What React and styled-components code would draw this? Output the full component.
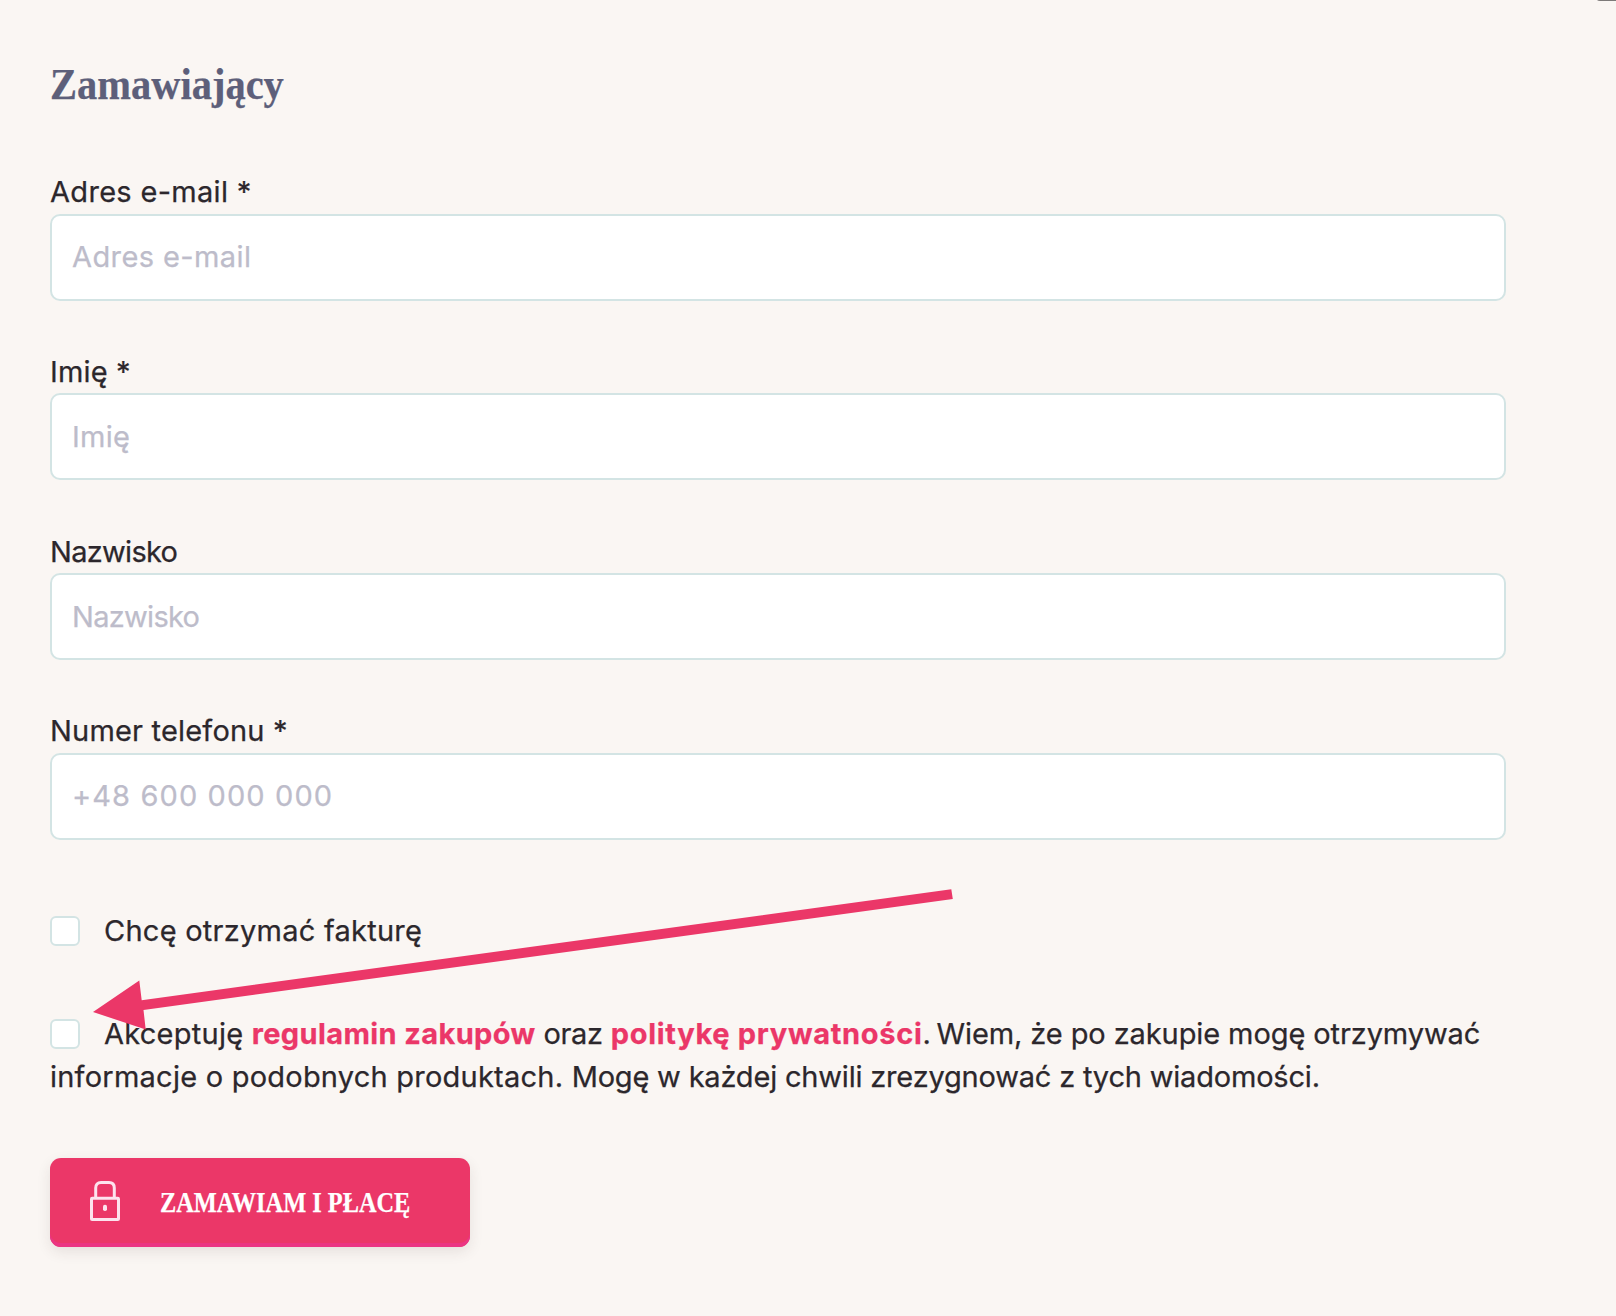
import React from "react";
import styled, { createGlobalStyle } from "styled-components";

const Global = createGlobalStyle`
  *, *::before, *::after { box-sizing: border-box; }
  html, body { margin: 0; background: #faf6f3; }
`;

const Page = styled.main`
  position: relative;
  width: 1616px;
  height: 1316px;
  padding: 56px 110px 0 50px;
  overflow: hidden;
  background: #faf6f3;
  color: #2c272c;
  font: 400 29px/43px Inter, "Noto Sans", sans-serif;
  -webkit-text-stroke: 0.25px currentColor;
`;

const CornerTab = styled.div`
  position: absolute;
  top: -20px;
  right: -20px;
  width: 40px;
  height: 21px;
  border-radius: 0 0 0 4px;
  background: #7d7a79;
`;

const Title = styled.h2`
  width: max-content;
  height: 114.2px;
  margin: 0;
  color: #5d5f7a;
  font: 700 44px/57px "Liberation Serif", serif;
  transform: scaleX(0.92);
  transform-origin: left;
`;

const Form = styled.form`
  display: flex;
  flex-direction: column;
  align-items: flex-start;
`;

const Field = styled.label`
  display: flex;
  flex-direction: column;
  gap: 0.5px;
  margin-bottom: 49.17px;
`;

const Run = styled.span`
  letter-spacing: ${(p) => p.$ls || 0}px;
`;

const Input = styled.input`
  width: 1456px;
  height: 87px;
  padding: 0 20px 1px;
  border: 2px solid #d3e4e4;
  border-radius: 10px;
  background: #fff;
  font: inherit;
  letter-spacing: ${(p) => p.$ls || 0}px;
  &::placeholder { color: #bdbcca; opacity: 1; -webkit-text-stroke: 0.25px #bdbcca; }
`;

const Consent = styled.label`
  display: block;
  white-space: nowrap;
  margin-top: ${(p) => p.$top}px;
`;

const Checkbox = styled.input`
  appearance: none;
  width: 30px;
  height: 30px;
  margin: 0 24px 0 0;
  vertical-align: -5px;
  border: 2px solid #d3e4e4;
  border-radius: 6px;
  background: #fff;
`;

const Link = styled.a`
  color: #eb3768;
  font-weight: 700;
  letter-spacing: ${(p) => p.$ls || 0}px;
`;

const Submit = styled.button`
  display: flex;
  align-items: center;
  gap: 40px;
  width: 420px;
  height: 89px;
  margin-top: 60px;
  padding: 0 0 0 40px;
  border: 0;
  border-radius: 11px;
  background: #eb3768;
  box-shadow: inset 0 -4px 0 #eb3583, 0 5px 14px rgba(60, 40, 40, 0.1);
  color: #fff;
  font: 700 29px/40px "Liberation Serif", serif;
`;

const LockIcon = styled.svg`
  flex: none;
  width: 30px;
  height: 40px;
  margin-top: -3px;
`;

const SubmitText = styled.span`
  white-space: nowrap;
  transform: scaleX(0.84);
  transform-origin: left;
`;

const Arrow = styled.svg`
  position: absolute;
  left: 90px;
  top: 880px;
  width: 870px;
  height: 155px;
  pointer-events: none;
`;

const fields = [
  { label: "Adres e-mail *", ls: 0.31, hint: "Adres e-mail", hintLs: 0.4 },
  { label: "Imię *", ls: 0.15, hint: "Imię", hintLs: 0.25 },
  { label: "Nazwisko", ls: -0.7, hint: "Nazwisko", hintLs: -0.7 },
  { label: "Numer telefonu *", ls: 0.19, hint: "+48 600 000 000", hintLs: 1.1 },
];

export default function App() {
  return (
    <Page>
      <Global />
      <CornerTab />
      <Title>Zamawiający</Title>
      <Form>
        {fields.map((f) => (
          <Field key={f.label}>
            <Run $ls={f.ls}>{f.label}</Run>
            <Input placeholder={f.hint} $ls={f.hintLs} />
          </Field>
        ))}
        <Consent $top={20}>
          <Checkbox type="checkbox" />
          <Run $ls={0.25}>Chcę otrzymać fakturę</Run>
        </Consent>
        <Consent $top={60}>
          <Checkbox type="checkbox" />
          <Run $ls={0.25}>Akceptuję </Run>
          <Link $ls={0.38}>regulamin zakupów</Link>
          <Run $ls={-0.3}> oraz </Run>
          <Link $ls={0.7}>politykę prywatności</Link>
          <Run $ls={-1.3}>. </Run>
          <Run $ls={-0.1}>Wiem, że po zakupie mogę otrzymywać</Run>
          <br />
          <Run $ls={0.23}>informacje o podobnych produktach. </Run>
          <Run $ls={-0.19}>Mogę w każdej chwili zrezygnować z tych wiadomości.</Run>
        </Consent>
        <Submit type="button">
          <LockIcon viewBox="0 0 30 40" fill="none" stroke="#fde3ee" strokeWidth="3">
            <path d="M5.7 16V7Q5.7 1.6 11 1.6H19Q24.3 1.6 24.3 7V16" />
            <rect x="1.5" y="17.3" width="27" height="21.2" rx="0.6" />
            <rect x="13" y="23.8" width="4" height="6.2" rx="1.8" fill="#fde3ee" stroke="none" />
          </LockIcon>
          <SubmitText>ZAMAWIAM I PŁACĘ</SubmitText>
        </Submit>
      </Form>
      <Arrow viewBox="90 880 870 155" fill="#eb3768">
        <path d="M951.3 889.2L952.8 899L143.5 1010L145.7 1029.5L93 1012L139.3 980.5L141.7 1000.2Z" />
      </Arrow>
    </Page>
  );
}
